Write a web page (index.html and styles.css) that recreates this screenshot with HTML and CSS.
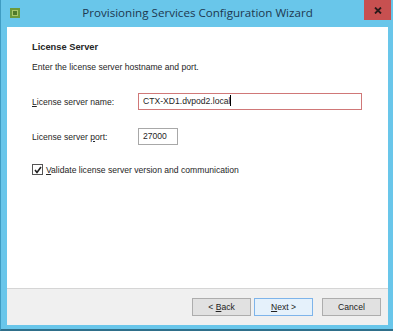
FILE: index.html
```html
<!DOCTYPE html>
<html lang="en">
<head>
    <meta charset="UTF-8">
    <title>Provisioning Services Configuration Wizard</title>
    <link rel="stylesheet" href="styles.css">
</head>
<body>
    <div class="window">
        <div class="titlebar">
            <svg class="app-icon" width="10" height="10" viewBox="0 0 10 10">
                <rect x="0" y="0" width="10" height="10" fill="#6c9a3c"/>
                <rect x="2" y="2" width="6" height="6" fill="#a9c76a"/>
                <rect x="3" y="3" width="4" height="4" fill="#4f7a2a"/>
            </svg>
            <div class="title">Provisioning Services Configuration Wizard</div>
            <div class="close">
                <svg width="8" height="7" viewBox="0 0 8 7">
                    <path d="M1 0.5 L7 6.5 M7 0.5 L1 6.5" stroke="#2b1a1a" stroke-width="1.8"/>
                </svg>
            </div>
        </div>
        <div class="client">
            <div class="page">
                <h1>License Server</h1>
                <p class="intro">Enter the license server hostname and port.</p>
                <div class="field">
                    <label for="host"><u>L</u>icense server name:</label>
                    <div class="input wide error">CTX-XD1.dvpod2.local<span class="caret"></span></div>
                </div>
                <div class="field">
                    <label for="port">License server <u>p</u>ort:</label>
                    <div class="input narrow">27000</div>
                </div>
                <div class="check">
                    <span class="box">
                        <svg width="8" height="8" viewBox="0 0 8 8">
                            <path d="M1 4 L3 6.5 L7 1" fill="none" stroke="#222" stroke-width="1.6"/>
                        </svg>
                    </span>
                    <span><u>V</u>alidate license server version and communication</span>
                </div>
            </div>
            <div class="footer">
                <button class="btn">&lt; <u>B</u>ack</button>
                <button class="btn default"><u>N</u>ext &gt;</button>
                <button class="btn cancel">Cancel</button>
            </div>
        </div>
    </div>
</body>
</html>
```

FILE: styles.css
```css
body {
    margin: 0;
    font-family: "Liberation Sans", Arial, sans-serif;
    font-size: 8.6px;
    color: #262626;
}
.window {
    width: 393px;
    height: 331px;
    box-sizing: border-box;
    background-color: #69c6ea;
    border-left: 1px solid #3f9cc2;
    border-bottom: 2px solid #2f6f8a;
    padding: 0 5px 4px 6px;
    display: flex;
    flex-direction: column;
}
.titlebar {
    height: 27px;
    display: grid;
    grid-template-columns: 1fr auto 1fr;
    align-items: start;
}
.app-icon {
    margin: 8px 0 0 3px;
}
.title {
    font-family: "Open Sans", sans-serif;
    font-size: 11.6px;
    color: #1d3850;
    padding-top: 5px;
}
.close {
    justify-self: end;
    width: 27px;
    height: 20px;
    margin-right: -3px;
    background-color: #c75050;
    display: flex;
    justify-content: center;
    align-items: center;
}
.client {
    flex: 1;
    display: flex;
    flex-direction: column;
    background-color: #fff;
}
.page {
    flex: 1;
    padding: 15px 0 0 25px;
}
h1 {
    font-size: 9.3px;
    font-weight: bold;
    margin: 0;
}
.intro {
    margin: 10px 0 0;
}
.field {
    display: flex;
    align-items: center;
    margin-top: 21px;
}
.field + .field {
    margin-top: 18px;
}
label {
    width: 106px;
}
.input {
    box-sizing: border-box;
    height: 17px;
    border: 1px solid #a8a8a8;
    padding: 0 4px;
    line-height: 15px;
}
.wide {
    width: 224px;
}
.narrow {
    width: 40px;
}
.error {
    border-color: #d07878;
}
.caret {
    display: inline-block;
    width: 1px;
    height: 11px;
    background-color: #000;
    vertical-align: -2px;
}
.check {
    display: flex;
    align-items: center;
    gap: 3px;
    margin-top: 19px;
}
.box {
    width: 9px;
    height: 9px;
    border: 1px solid #555;
    display: flex;
    justify-content: center;
    align-items: center;
}
.footer {
    height: 36px;
    border-top: 1px solid #d5d5d5;
    background-color: #f0f0f0;
    display: flex;
    justify-content: flex-end;
    align-items: center;
    gap: 3px;
    padding-right: 7px;
}
.btn {
    width: 59px;
    height: 18px;
    padding: 0;
    font-family: "Liberation Sans", Arial, sans-serif;
    font-size: 8.6px;
    color: #222;
    background-color: #e1e1e1;
    border: 1px solid #adadad;
}
.default {
    border-color: #7eb4ea;
    background-color: #e5f1fb;
}
.cancel {
    margin-left: 6px;
}
```
